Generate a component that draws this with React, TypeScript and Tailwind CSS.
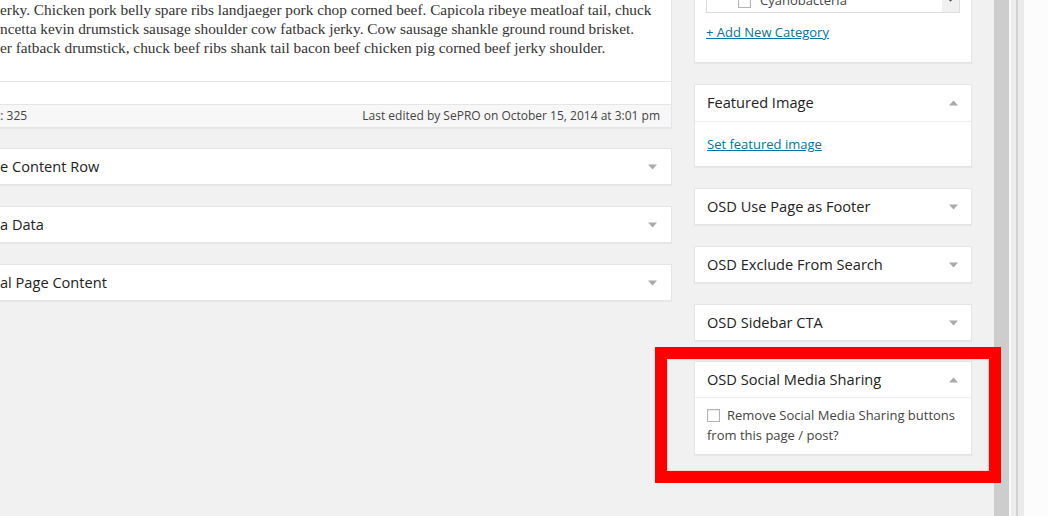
import React from "react";

const Arrow = ({ up }: { up?: boolean }) => (
  <svg width="9" height="6" viewBox="0 0 9 6" className="shrink-0">
    {up ? <polygon points="0,5.5 9,5.5 4.5,0.5" fill="#aaaaaa" /> : <polygon points="0,0.5 9,0.5 4.5,5.5" fill="#aaaaaa" />}
  </svg>
);

const Collapsed = ({ title, left }: { title: string; left?: boolean }) => (
  <div className={`bg-white border-[#e5e5e5] shadow-[0_1px_1px_rgba(0,0,0,0.04)] mb-[21px] ${left ? "border-y border-r" : "border"}`}>
    <div className={`h-[35px] flex items-center justify-between ${left ? "pl-0 pr-[14px]" : "pl-[12px] pr-[13px]"} text-[14.6px] text-[#222]`}>
      <span className="whitespace-nowrap">{title}</span>
      <Arrow />
    </div>
  </div>
);

export default function App() {
  return (
    <div className="w-[1048px] h-[516px] overflow-hidden flex bg-[#f1f1f1] relative font-['Open_Sans',sans-serif]">
      <div className="w-[994px] shrink-0 flex items-start">
        {/* Left column */}
        <div className="w-[672px] shrink-0 flex flex-col">
          <div className="bg-white border-r border-b border-[#e5e5e5] shadow-[0_1px_1px_rgba(0,0,0,0.04)] mb-[20px]">
            <div className="h-[82px] border-b border-[#e5e5e5] pt-[0px] font-['Liberation_Serif',serif] text-[15.3px] leading-[19px] text-[#333] whitespace-nowrap">
              <div>erky. Chicken pork belly spare ribs landjaeger pork chop corned beef. Capicola ribeye meatloaf tail, chuck</div>
              <div>ncetta kevin drumstick sausage shoulder cow fatback jerky. Cow sausage shankle ground round brisket.</div>
              <div>er fatback drumstick, chuck beef ribs shank tail bacon beef chicken pig corned beef jerky shoulder.</div>
            </div>
            <div className="h-[22px]" />
            <div className="h-[23px] border-t border-[#e5e5e5] bg-[#f7f7f7] flex items-center justify-between pr-[11px] text-[12px] text-[#444] whitespace-nowrap">
              <span className="ml-[-4px]">t: 325</span>
              <span>Last edited by SePRO on October 15, 2014 at 3:01 pm</span>
            </div>
          </div>
          <Collapsed left title="e Content Row" />
          <Collapsed left title="a Data" />
          <Collapsed left title="al Page Content" />
        </div>

        {/* Right column */}
        <div className="w-[278px] ml-[22px] shrink-0 flex flex-col">
          <div className="bg-white border border-[#e5e5e5] shadow-[0_1px_1px_rgba(0,0,0,0.04)] mt-[-40px] mb-[21px] px-[11px] pb-[20px]">
            <div className="h-[52px] border border-[#dddddd] flex">
              <div className="flex-1 flex flex-col justify-end pb-[1px]">
                <div className="h-[20px] flex items-center text-[13px] text-[#444]">
                  <span className="ml-[31px] w-[13px] h-[13px] border border-[#b4b4b4] bg-white shadow-[inset_0_1px_2px_rgba(0,0,0,0.1)]" />
                  <span className="ml-[9px]">Cyanobacteria</span>
                </div>
              </div>
              <div className="w-[17px] bg-[#f0f0f0] flex flex-col justify-end">
                <div className="h-[17px] flex items-start justify-center pt-[1px]">
                  <svg width="9" height="6" viewBox="0 0 9 6">
                    <polyline points="1,1 4.5,4.5 8,1" fill="none" stroke="#555" strokeWidth="1.6" />
                  </svg>
                </div>
              </div>
            </div>
            <a className="block mt-[9px] leading-[20px] text-[13px] text-[#0074a2] underline">+ Add New Category</a>
          </div>

          <div className="bg-white border border-[#e5e5e5] shadow-[0_1px_1px_rgba(0,0,0,0.04)] mb-[21px]">
            <div className="h-[36px] flex items-center justify-between pl-[12px] pr-[13px] text-[14.6px] text-[#222]">
              <span>Featured Image</span>
              <Arrow up />
            </div>
            <div className="border-t border-[#eeeeee] px-[12px] pt-[12px] pb-[12px] leading-[20px] text-[13px]">
              <a className="text-[#0074a2] underline">Set featured image</a>
            </div>
          </div>

          <Collapsed title="OSD Use Page as Footer" />
          <Collapsed title="OSD Exclude From Search" />
          <div className="bg-white border border-[#e5e5e5] shadow-[0_1px_1px_rgba(0,0,0,0.04)] mb-[20px]">
            <div className="h-[35px] flex items-center justify-between pl-[12px] pr-[13px] text-[14.6px] text-[#222]">
              <span className="whitespace-nowrap">OSD Sidebar CTA</span>
              <Arrow />
            </div>
          </div>

          <div className="bg-white border border-[#e5e5e5] shadow-[0_1px_1px_rgba(0,0,0,0.04)] mb-[21px]">
            <div className="h-[35px] flex items-center justify-between pl-[12px] pr-[13px] text-[14.6px] text-[#222]">
              <span>OSD Social Media Sharing</span>
              <Arrow up />
            </div>
            <div className="border-t border-[#eeeeee] px-[12px] pt-[7px] pb-[9px] leading-[20px] text-[13px] text-[#444] whitespace-nowrap">
              <div className="flex items-center">
                <span className="w-[13px] h-[13px] border border-[#b4b4b4] bg-white shadow-[inset_0_1px_2px_rgba(0,0,0,0.1)] mr-[7px]" />
                <span>Remove Social Media Sharing buttons</span>
              </div>
              <div>from this page / post?</div>
            </div>
          </div>
        </div>
      </div>

      {/* Window scrollbar / frame */}
      <div className="w-[15px] shrink-0 bg-[#cdcdcd]" />
      <div className="w-[2px] shrink-0 bg-[#fafafa]" />
      <div className="w-[5px] shrink-0 bg-[#ededed]" />
      <div className="w-[2px] shrink-0 bg-[#d2d2d2]" />
      <div className="w-[6px] shrink-0 bg-[#ebebeb]" />
      <div className="flex-1 bg-[#fcfcfc]" />

      {/* Red annotation */}
      <div className="absolute left-[655px] top-[347px] w-[346px] h-[136px] border-[12px] border-[#ff0000]">
        <div className="w-full h-full border border-[#f6d6d6]" />
      </div>
    </div>
  );
}
